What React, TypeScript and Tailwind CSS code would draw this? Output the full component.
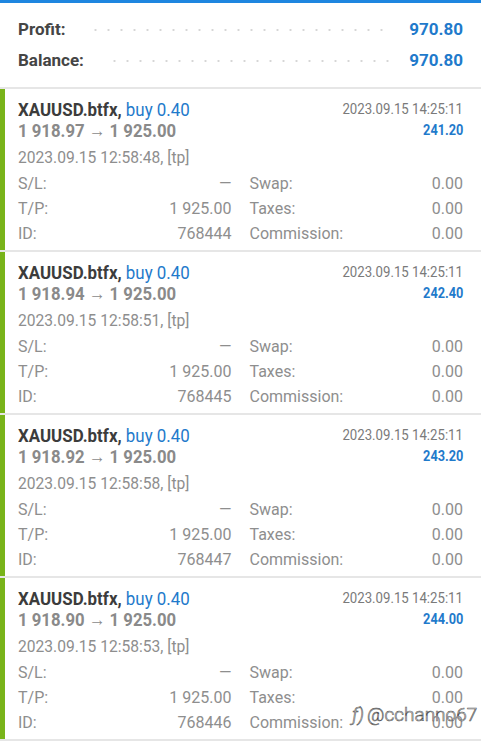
const deals = [
  { open: '1 918.97', profit: '241.20', time: '2023.09.15 12:58:48', id: '768444' },
  { open: '1 918.94', profit: '242.40', time: '2023.09.15 12:58:51', id: '768445' },
  { open: '1 918.92', profit: '243.20', time: '2023.09.15 12:58:58', id: '768447' },
  { open: '1 918.90', profit: '244.00', time: '2023.09.15 12:58:53', id: '768446' },
];

function SummaryRow({ label, value }: { label: string; value: string }) {
  return (
    <div className="flex items-center h-[31px]">
      <span className="font-bold text-[17px] text-[#454545]">{label}</span>
      <div className="flex-1 h-[4px] ml-[24px] mr-[16px] bg-[radial-gradient(circle,#d6d6d6_0.9px,transparent_1.3px)] bg-[length:13px_4px]" />
      <span className="font-bold text-[17px] text-[#1f7acb]">{value}</span>
    </div>
  );
}

function Field({ label, value }: { label: string; value: string }) {
  return (
    <div className="flex justify-between h-[25px] items-center">
      <span>{label}</span>
      <span>{value}</span>
    </div>
  );
}

function DealCard({ deal }: { deal: (typeof deals)[number] }) {
  return (
    <div className="flex border-b-2 border-[#e6e6e6]">
      <div className="w-[5px] shrink-0 bg-[#79b41a]" />
      <div className="flex-1 pl-[13px] pr-[18px] pt-[9px] pb-[4px] text-[16px] text-[#8e8e8e]">
        <div className="flex justify-between items-center h-[22px] whitespace-nowrap">
          <span className="inline-block origin-left scale-x-[0.89] text-[19px] leading-none">
            <span className="font-bold text-[#3c3c3c]">XAUUSD.btfx, </span>
            <span className="text-[#1f7acb]">buy 0.40</span>
          </span>
          <span className="inline-block origin-right scale-x-[0.88] text-[15px] text-[#7a7a7a]">
            2023.09.15 14:25:11
          </span>
        </div>
        <div className="flex justify-between items-center h-[21px] whitespace-nowrap">
          <span className="inline-block origin-left scale-x-[0.88] text-[19px] font-bold text-[#8a8a8a] leading-none">
            {deal.open} → 1 925.00
          </span>
          <span className="inline-block origin-right scale-x-[0.85] text-[15px] font-bold text-[#1f7acb]">
            {deal.profit}
          </span>
        </div>
        <div className="mt-[5px] h-[25px] flex items-center text-[15.6px]">{deal.time}, [tp]</div>
        <div className="grid grid-cols-2 gap-x-[18px]">
          <div>
            <Field label="S/L:" value="—" />
            <Field label="T/P:" value="1 925.00" />
            <Field label="ID:" value={deal.id} />
          </div>
          <div>
            <Field label="Swap:" value="0.00" />
            <Field label="Taxes:" value="0.00" />
            <Field label="Commission:" value="0.00" />
          </div>
        </div>
      </div>
    </div>
  );
}

export default function App() {
  return (
    <div className="relative w-[481px] h-[745px] overflow-hidden bg-white font-['Roboto',sans-serif]">
      <div className="h-[3px] bg-[#1e86e0]" />
      <div className="px-[18px] pt-[11px] pb-[11px] border-b-2 border-[#e6e6e6]">
        <SummaryRow label="Profit:" value="970.80" />
        <SummaryRow label="Balance:" value="970.80" />
      </div>
      {deals.map((d) => (
        <DealCard key={d.id} deal={d} />
      ))}
      <div className="absolute left-[352px] top-[701px] flex items-center gap-[3px] text-[19px] font-light text-white [-webkit-text-stroke:0.6px_#555]">
        <span className="italic">ƒ)</span>
        <span>@cchanno67</span>
      </div>
    </div>
  );
}
